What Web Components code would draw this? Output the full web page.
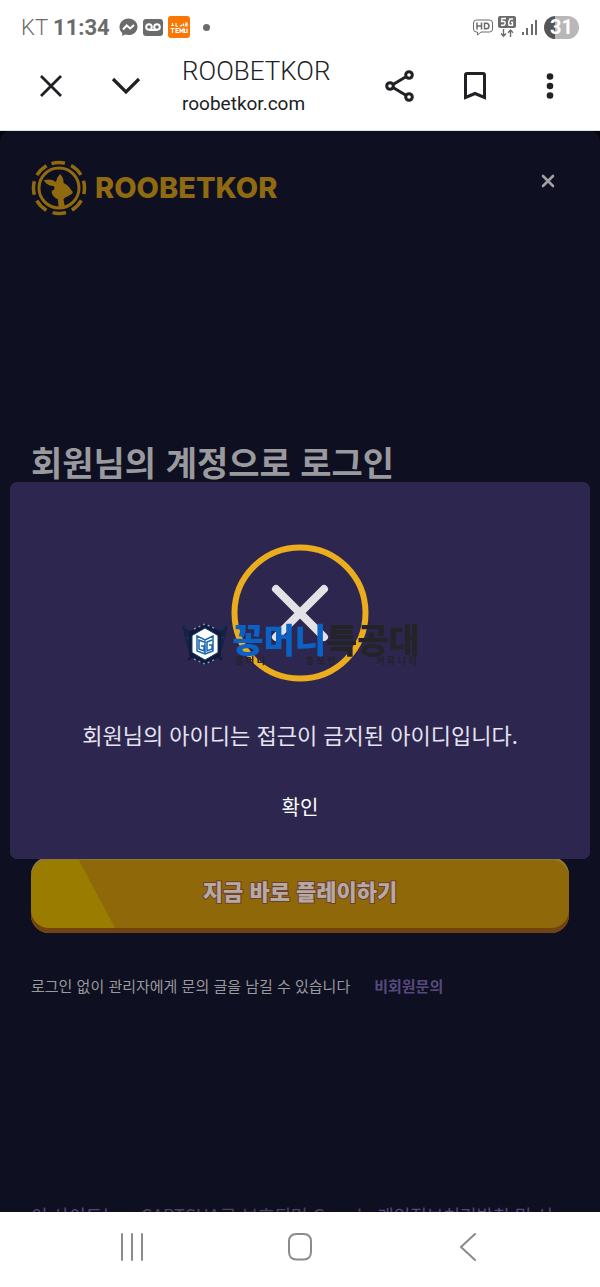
<!DOCTYPE html>
<html lang="ko">
<head>
<meta charset="utf-8">
<meta name="viewport" content="width=device-width, initial-scale=1">
<title>ROOBETKOR</title>
<style>
  html, body {
    margin: 0;
    height: 100%;
  }
  body {
    display: flex;
    flex-direction: column;
    background: #fff;
    font-family: "Noto Sans CJK KR", "Noto Sans", sans-serif;
  }
</style>
</head>
<body>
<status-bar carrier="KT" time="11:34" battery="31"></status-bar>
<browser-bar>
  <span slot="title">ROOBETKOR</span>
  <span slot="url">roobetkor.com</span>
</browser-bar>
<login-page>
  <span slot="heading">회원님의 계정으로 로그인</span>
  <play-button slot="action">지금 바로 플레이하기</play-button>
  <span slot="info">로그인 없이 관리자에게 문의 글을 남길 수 있습니다</span>
  <alert-dialog slot="dialog" action="확인">회원님의 아이디는 접근이 금지된 아이디입니다.</alert-dialog>
</login-page>
<nav-bar></nav-bar>
<water-mark></water-mark>

<script>
  class BaseElement extends HTMLElement {
    render(style, component) {
      const shadow = this.attachShadow({ mode: "open" });
      const template = document.createElement("template");
      template.innerHTML = `<style>${style}</style>${component}`;
      shadow.appendChild(template.content.cloneNode(true));
    }
  }

  class StatusBar extends BaseElement {
    constructor() {
      super();
      this.render(`
        :host {
          display: flex;
          flex: none;
          align-items: center;
          height: 54px;
          padding: 0 21px;
          color: #6b6b6b;
          font-family: Roboto, sans-serif;
          font-size: 22px;
        }
        .left, .right { display: flex; align-items: center; gap: 5px; }
        .left { flex: 1; }
        .carrier { font-weight: 300; }
        .time { font-weight: 700; margin-right: 4px; }
        svg { display: block; }
        .dot { width: 7px; height: 7px; border-radius: 50%; background: #6b6b6b; margin-left: 8px; }
        .battery {
          width: 35px;
          line-height: 23px;
          border-radius: 12px;
          text-align: center;
          font-size: 20px;
          font-weight: 700;
          color: #fff;
          background: linear-gradient(90deg, #555 31%, #b8b8b8 31%);
        }
      `, `
        <div class="left">
          <span class="carrier"></span>
          <span class="time"></span>
          <svg width="19" height="19" viewBox="0 0 19 19">
            <path fill="#6b6b6b" d="M9.500 0.500C4.400 .500 .500 4.200 .500 9c0 2.500 1 4.600 2.700 6.100v3l2.900-1.500c1 .300 2.200 .500 3.400 .500 5.100 0 9-3.600 9-8.300S14.600 .500 9.500 .500z"/>
            <path fill="none" stroke="#fff" stroke-width="2" d="M4 11.500 7.700 7.500 11.200 10.500 15 7"/>
          </svg>
          <svg width="20" height="17" viewBox="0 0 20 17">
            <rect width="20" height="17" rx="3" fill="#6b6b6b"/>
            <g fill="none" stroke="#fff" stroke-width="2"><circle cx="6" cy="8" r="2.800"/><circle cx="14" cy="8" r="2.800"/><path d="M6 11h8"/></g>
          </svg>
          <svg width="22" height="22" viewBox="0 0 22 22">
            <rect width="22" height="22" rx="3" fill="#fb7701"/>
            <g fill="none" stroke="#fff" stroke-width="1.200">
              <path d="M3 9.500h3M4.500 7v3M8 7v3l2 .500M12 9.500c1 1 2 0 2-1M15.500 7.500v2.500M17 7h2v3h-2.500M17 8.500h2"/>
              <path d="M2.500 12.500h4M4.500 12.500V17M11 12.500H8V16.500h3M8 14.500h2.500M12 17v-4l1.500 2 1.500-2v4M16.500 12.500v4h2.500v-4"/>
            </g>
          </svg>
          <span class="dot"></span>
        </div>
        <div class="right">
          <svg width="20" height="17" viewBox="0 0 20 17" fill="none" stroke="#6b6b6b">
            <path d="M3.500 1h13q3 0 3 3v6q0 3-3 3H8l-3.500 3V13H3.500q-3 0-3-3V4q0-3 3-3z"/>
            <path stroke-width="1.500" d="M4 3.500v7M8.500 3.500v7M4 7h4.500M11.500 4.200v5.600h1.500q3 0 3-2.800t-3-2.800z"/>
          </svg>
          <svg width="18" height="22" viewBox="0 0 18 22" fill="none">
            <rect width="18" height="12" rx="2" fill="#6b6b6b"/>
            <path stroke="#fff" stroke-width="1.400" d="M8 2.500H4L3.500 5.500H6.500Q8 7.500 6 9.300H3M15 3H12Q10 6 11 9.300H14.500V6.300H13"/>
            <path stroke="#6b6b6b" stroke-width="1.400" d="M5.500 13v7M3 17.500 5.500 20.300 8 17.500M12.500 21v-7M10 16.700 12.500 14 15 16.700"/>
          </svg>
          <svg width="18" height="17" viewBox="0 0 18 17" fill="#6b6b6b">
            <rect x="1" y="13" width="2" height="3"/><rect x="5" y="9" width="2" height="7"/><rect x="10" y="5" width="2" height="11"/><rect x="14" y="1" width="2" height="15"/>
          </svg>
          <span class="battery"></span>
        </div>
      `);
      for (const name of ["carrier", "time", "battery"]) {
        this.shadowRoot.querySelector("." + name).textContent = this.getAttribute(name);
      }
    }
  }

  class BrowserBar extends BaseElement {
    constructor() {
      super();
      this.render(`
        :host {
          display: flex;
          flex: none;
          box-sizing: border-box;
          height: 77px;
          padding: 0 13px;
          border-bottom: 1px solid #dfe1ea;
          color: #202124;
          font-family: Roboto, sans-serif;
        }
        button {
          display: grid;
          place-items: center;
          width: 75px;
          height: 64px;
          padding: 0;
          border: 0;
          background: none;
          color: inherit;
        }
        .text { flex: 1; padding-left: 19px; }
        .title { font-size: 26px; line-height: 34px; font-weight: 300; }
        .url { font-size: 19px; line-height: 32px; }
      `, `
        <button aria-label="닫기">
          <svg width="24" height="24" viewBox="0 0 24 24" fill="none" stroke="currentColor" stroke-width="2.800"><path d="M2 2l20 20M22 2 2 22"/></svg>
        </button>
        <button aria-label="접기">
          <svg width="30" height="18" viewBox="0 0 30 18" fill="none" stroke="currentColor" stroke-width="3.200"><path d="M2 2l13 13L28 2"/></svg>
        </button>
        <div class="text">
          <div class="title"><slot name="title"></slot></div>
          <div class="url"><slot name="url"></slot></div>
        </div>
        <button aria-label="공유">
          <svg width="30" height="32" viewBox="0 0 30 32" fill="none" stroke="currentColor" stroke-width="3">
            <path d="M8 14.500 20.500 7M8 17.500 20.500 25"/><circle cx="5" cy="16" r="3.300"/><circle cx="24" cy="5" r="3.300"/><circle cx="24" cy="27" r="3.300"/>
          </svg>
        </button>
        <button aria-label="북마크">
          <svg width="24" height="30" viewBox="0 0 24 30" fill="none" stroke="currentColor" stroke-width="3"><path d="M2.500 26.500V4q0-1.500 1.500-1.500h16q1.500 0 1.500 1.500v22.500L12 22.500z"/></svg>
        </button>
        <button aria-label="더보기">
          <svg width="8" height="28" viewBox="0 0 8 28" fill="currentColor"><circle cx="4" cy="4.500" r="3.300"/><circle cx="4" cy="14" r="3.300"/><circle cx="4" cy="23.500" r="3.300"/></svg>
        </button>
      `);
    }
  }

  class BrandLogo extends BaseElement {
    constructor() {
      super();
      this.render(`
        :host {
          display: flex;
          align-items: center;
          gap: 8px;
          color: #8f6a10;
          font: 800 29px/56px Inter, sans-serif;
        }
      `, `
        <svg width="56" height="56" viewBox="0 0 56 56" fill="none" stroke="currentColor">
          <circle cx="28" cy="28" r="25.500" stroke-width="3.500" stroke-dasharray="13.500 6.530" transform="rotate(-107 28 28)"/>
          <circle cx="28" cy="28" r="20" stroke-width="3"/>
          <path fill="currentColor" stroke="none" d="M12.500 20.500Q19 18 25 22q1-5 4-8 4 4 3.500 9 5 2 8 7.500 2 1 1 3l-5 3q-3 .500-4 3l1.500 8h-6.500l-.500-8q-6-3-6.500-8l3-2.500-.500-3q-7 0-10.500-6z"/>
        </svg>
        <span>ROOBETKOR</span>
      `);
    }
  }

  class PlayButton extends BaseElement {
    constructor() {
      super();
      this.render(`
        :host { display: block; }
        button {
          display: block;
          width: 100%;
          height: 76px;
          padding: 0 0 10px;
          border: 0;
          border-radius: 18px;
          background: linear-gradient(62deg, #9a7d00 76px, #8f6809 77px);
          box-shadow: inset 0 -5px #704310, inset 0 3px #8c7832;
          color: #b5a9a4;
          font: 900 22px/30px "Noto Sans CJK KR", sans-serif;
          -webkit-text-stroke: 2px #70402c;
          paint-order: stroke fill;
        }
      `, `<button><slot></slot></button>`);
    }
  }

  class AlertDialog extends BaseElement {
    constructor() {
      super();
      this.render(`
        :host {
          display: flex;
          flex: 1;
          flex-direction: column;
          align-items: center;
          margin: 0 10px;
          padding: 62px 20px 30px;
          border-radius: 7px;
          background: #2d2750;
          color: #e6e3f0;
        }
        svg { display: block; }
        p { margin: 35px 0 34px; font-size: 22px; line-height: 34px; text-align: center; }
        button {
          padding: 0 24px;
          border: 0;
          background: none;
          color: #fff;
          font: 400 20px/44px "Noto Sans CJK KR", sans-serif;
        }
      `, `
        <svg width="138" height="138" viewBox="0 0 138 138" fill="none">
          <circle cx="69" cy="69" r="65.500" stroke="#ebad1d" stroke-width="6"/>
          <path d="M45 45l48 48M93 45 45 93" stroke="#e3e3e7" stroke-width="8" stroke-linecap="round"/>
        </svg>
        <p><slot></slot></p>
        <button></button>
      `);
      this.shadowRoot.querySelector("button").textContent = this.getAttribute("action");
    }
  }

  class LoginPage extends BaseElement {
    constructor() {
      super();
      this.render(`
        :host {
          display: block;
          position: relative;
          flex: 1;
          min-height: 0;
          overflow: hidden;
          background: #05060d;
        }
        main {
          padding: 29px 31px 0;
          border-radius: 10px 10px 0 0;
          background: #0e0f20;
          color: #9a9a9e;
        }
        header { display: flex; justify-content: space-between; align-items: flex-start; }
        .close {
          display: grid;
          place-items: center;
          width: 42px;
          height: 42px;
          padding: 0;
          border: 0;
          background: none;
          color: #a0a0a4;
        }
        h1 { margin: 222px 0 371px; font-size: 34px; line-height: 48px; font-weight: 700; }
        .info { display: flex; gap: 24px; margin: 41px 0 203px; font-size: 15px; line-height: 24px; }
        a { color: #57497e; text-decoration: none; }
        .info a { font-weight: 700; }
        footer { font-size: 18px; line-height: 28px; color: #4a4860; }
        .overlay {
          position: absolute;
          inset: 0;
          display: flex;
          align-items: center;
          padding-bottom: 2px;
        }
      `, `
        <main>
          <header>
            <brand-logo></brand-logo>
            <button class="close" aria-label="닫기">
              <svg width="14" height="14" viewBox="0 0 14 14" fill="none" stroke="currentColor" stroke-width="2.600" stroke-linecap="round"><path d="M2 2l10 10M12 2 2 12"/></svg>
            </button>
          </header>
          <h1><slot name="heading"></slot></h1>
          <slot name="action"></slot>
          <div class="info"><slot name="info"></slot><a href="#">비회원문의</a></div>
          <footer><a href="#">이 사이트는</a> reCAPTCHA로 보호되며 Google <a href="#">개인정보처리방침 및 서비스</a></footer>
        </main>
        <div class="overlay"><slot name="dialog"></slot></div>
      `);
    }
  }

  class NavBar extends BaseElement {
    constructor() {
      super();
      this.render(`
        :host {
          display: flex;
          flex: none;
          justify-content: center;
          height: 75px;
          background: #fff;
        }
        button {
          display: grid;
          place-items: center;
          width: 28%;
          height: 70px;
          padding: 0;
          border: 0;
          background: none;
        }
        svg { fill: none; stroke: #8b8b8b; stroke-width: 2; stroke-linecap: round; }
      `, `
        <button aria-label="최근 앱"><svg width="24" height="28" viewBox="0 0 24 28"><path d="M2 1v26M12 1v26M22 1v26"/></svg></button>
        <button aria-label="홈"><svg width="26" height="30" viewBox="0 0 26 30"><path d="M9.500 2h7Q24 2 24 9.500v10Q24 27.500 16.500 27.500h-7Q2 27.500 2 19.500v-10Q2 2 9.500 2z"/></svg></button>
        <button aria-label="뒤로"><svg width="16" height="28" viewBox="0 0 16 28"><path d="M15 1 1 14l14 13"/></svg></button>
      `);
    }
  }

  class WaterMark extends BaseElement {
    constructor() {
      super();
      this.render(`
        :host {
          position: fixed;
          inset: 0;
          display: flex;
          align-items: center;
          justify-content: center;
          gap: 2px;
          pointer-events: none;
        }
        .name { font-size: 34px; line-height: 34px; font-weight: 900; color: #242428; }
        .name b { font-weight: 900; color: #0b62c4; }
        .tag { display: flex; justify-content: space-between; padding: 0 3px; font-size: 9px; line-height: 10px; font-weight: 900; color: #25222f; }
      `, `
        <svg width="50" height="44" viewBox="0 0 50 44" fill="none">
          <path fill="#182044" d="M2 3l15 8-4 8-8-4zM4 13l10 6-1 7-6-3zM6 22l8 4 3 7-8-4zM48 3 33 11l4 8 8-4zM46 13l-10 6 1 7 6-3zM44 22l-8 4-3 7 8-4z"/>
          <path stroke="#12325c" stroke-width="2" d="M5 5l9 6M6 15l7 4M45 5l-9 6M44 15l-7 4"/>
          <path stroke="#111a38" stroke-width="2" d="M8 38 17 30M42 38 33 30"/>
          <path fill="#101b3c" d="M25 1 41 10v24L25 43 9 34V10z"/>
          <path stroke="#7994b8" stroke-width="1.500" stroke-dasharray="2 3" d="M14 7l11-5 11 5M14 37l11 5 11-5"/>
          <path fill="#fff" stroke="#173764" d="M25 6 38 13.500v17L25 38 12 30.500V13.500z"/>
          <path stroke="#1964b0" stroke-width="1.500" d="M17 14l8 4 8-4v15l-8 3-8-3zM24 20l-5-2v9l5 2v-5h-3M32 18l-5 2v9l5-2v-4h-3M25 18v14"/>
        </svg>
        <div>
          <div class="name"><b>꽁머니</b>특공대</div>
          <div class="tag"><span>꽁 머 니</span><span>홍 보 방</span><span>커 뮤 니 티</span></div>
        </div>
      `);
    }
  }

  customElements.define("status-bar", StatusBar);
  customElements.define("browser-bar", BrowserBar);
  customElements.define("brand-logo", BrandLogo);
  customElements.define("play-button", PlayButton);
  customElements.define("alert-dialog", AlertDialog);
  customElements.define("login-page", LoginPage);
  customElements.define("nav-bar", NavBar);
  customElements.define("water-mark", WaterMark);
</script>
</body>
</html>
